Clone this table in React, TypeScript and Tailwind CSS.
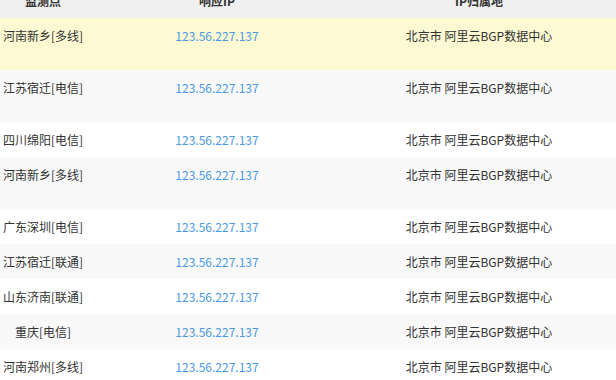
const rows = [
  { point: '河南新乡[多线]', tall: true, bg: 'bg-[#fdfad3]' },
  { point: '江苏宿迁[电信]', tall: true, bg: 'bg-[#f9f9f9]' },
  { point: '四川绵阳[电信]', tall: false, bg: 'bg-white' },
  { point: '河南新乡[多线]', tall: true, bg: 'bg-[#f9f9f9]' },
  { point: '广东深圳[电信]', tall: false, bg: 'bg-white' },
  { point: '江苏宿迁[联通]', tall: false, bg: 'bg-[#f9f9f9]' },
  { point: '山东济南[联通]', tall: false, bg: 'bg-white' },
  { point: '重庆[电信]', tall: false, bg: 'bg-[#f9f9f9]' },
  { point: '河南郑州[多线]', tall: false, bg: 'bg-white' },
];

function App() {
  return (
    <div className="w-[616px] h-[380px] overflow-hidden bg-white font-['Noto_Sans_CJK_SC',sans-serif] text-[12px] leading-4 text-[#333]">
      <div className="-mt-[17px]">
        <div className="grid grid-cols-[86px_262px_262px] h-[35px] items-center bg-[#f0f0f0] font-bold text-center">
          <div>监测点</div>
          <div>响应IP</div>
          <div>IP归属地</div>
        </div>
        {rows.map((r, i) => (
          <div
            key={i}
            className={`grid grid-cols-[86px_262px_262px] pt-[10px] text-center ${r.tall ? 'h-[52px]' : 'h-[35px]'} ${r.bg}`}
          >
            <div>{r.point}</div>
            <div className="text-[#4a9ae6]">123.56.227.137</div>
            <div>北京市 阿里云BGP数据中心</div>
          </div>
        ))}
      </div>
    </div>
  );
}

export default App;
